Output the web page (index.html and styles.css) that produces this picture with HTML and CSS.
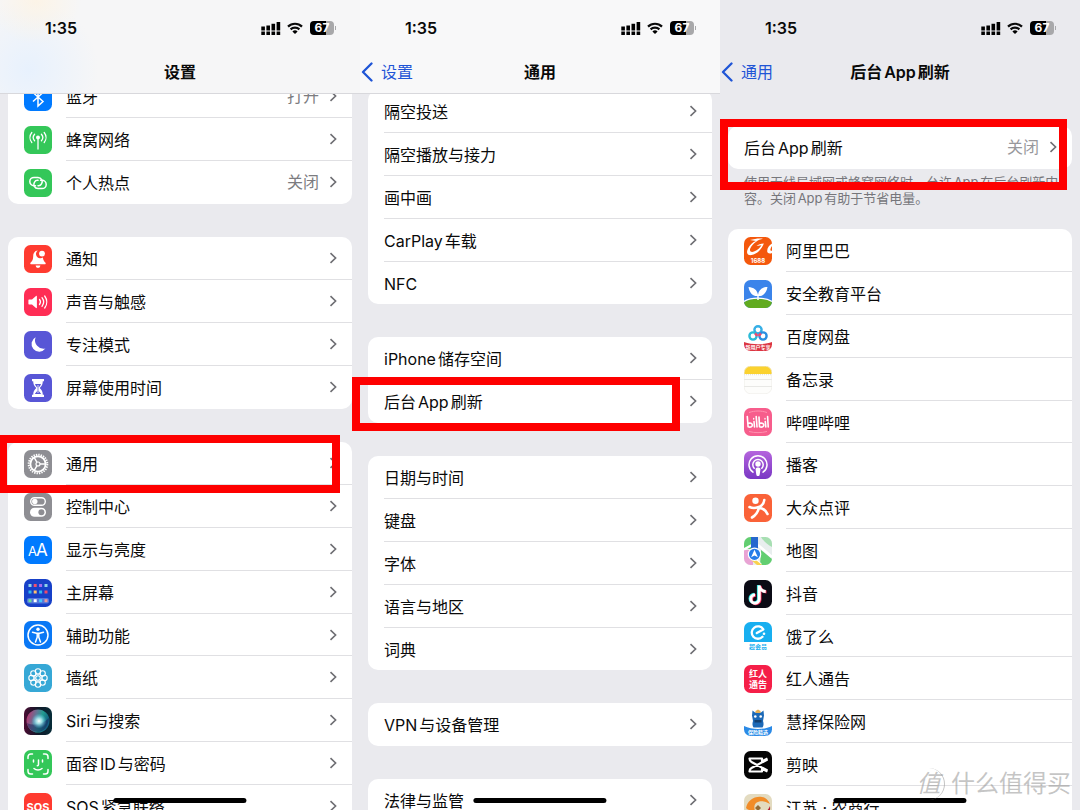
FILE: index.html
```html
<!DOCTYPE html>
<html lang="zh-CN">
<head>
    <meta charset="UTF-8">
    <meta name="viewport" content="width=device-width, initial-scale=1.0">
    <title>后台App刷新</title>
    <link rel="stylesheet" href="styles.css">
</head>
<body>

    <!-- Shared symbols -->
    <svg class="symbols" aria-hidden="true">
        <symbol id="chevron" viewBox="0 0 8 12">
            <path d="M1.5 1.2 6.6 6l-5.1 4.8" fill="none" stroke="currentColor" stroke-width="1.6"/>
        </symbol>
        <symbol id="back" viewBox="0 0 12 20">
            <path d="M10.5 1.5 2 10l8.5 8.5" fill="none" stroke="currentColor" stroke-width="2.3" stroke-linecap="round" stroke-linejoin="round"/>
        </symbol>
        <symbol id="signal" viewBox="0 0 20 13">
            <path d="M.3 4.6h3.600v3.800H.3zM5.400 3.500H9v4.900H5.400zM10.500 1.800h3.600v6.600h-3.600zM15.600 0h3.600v8.400h-3.600zM.3 9.600h3.600V13H.3zM5.400 9.600H9V13H5.400zM10.500 9.600h3.600V13h-3.600zM15.600 9.600h3.600V13h-3.600z"/>
        </symbol>
        <symbol id="wifi" viewBox="0 0 16 12">
            <g fill="none" stroke="currentColor" stroke-width="2.2">
                <path d="M1 4.6a10 10 0 0 1 14 0"/>
                <path d="M3.6 7.4a6.3 6.3 0 0 1 8.8 0"/>
            </g>
            <path d="M8 12 5.4 9.4a3.8 3.8 0 0 1 5.2 0z"/>
        </symbol>
    </svg>

    <main class="screens">

        <!-- Settings -->
        <section class="screen">
            <header class="top tinted">
                <div class="status">
                    <span class="time">1:35</span>
                    <svg class="signal"><use href="#signal"/></svg>
                    <svg class="wifi"><use href="#wifi"/></svg>
                    <span class="battery">67</span>
                </div>
                <div class="nav"><h1>设置</h1></div>
            </header>

            <div class="content">
                <ul class="group">
                    <li><a class="row" href="#">
                        <svg class="icon" viewBox="0 0 28 28"><rect width="28" height="28" rx="6.5" fill="#007aff"/><path d="m9 9.500 10 9L14 23V5l5 4.500-10 9" fill="none" stroke="#fff" stroke-width="1.5"/></svg>
                        <span class="body"><span class="label">蓝牙</span><span class="value">打开</span><svg class="chevron"><use href="#chevron"/></svg></span>
                    </a></li>
                    <li><a class="row" href="#">
                        <svg class="icon" viewBox="0 0 28 28"><rect width="28" height="28" rx="6.5" fill="#34c759"/><circle cx="14" cy="11.5" r="2" fill="#fff"/><path d="M14 12v11M10.600 8.200a5 5 0 0 0 0 6.600M17.400 8.200a5 5 0 0 1 0 6.600M7.800 6.500a8 8 0 0 0 0 10M20.200 6.500a8 8 0 0 1 0 10" fill="none" stroke="#fff" stroke-width="1.3" stroke-linecap="round"/></svg>
                        <span class="body"><span class="label">蜂窝网络</span><svg class="chevron"><use href="#chevron"/></svg></span>
                    </a></li>
                    <li><a class="row" href="#">
                        <svg class="icon" viewBox="0 0 28 28"><rect width="28" height="28" rx="6.5" fill="#34c759"/><g fill="none" stroke="#fff" stroke-width="1.5" stroke-linecap="round"><path d="M11.500 16.800H10a4.200 4.200 0 0 1 0-8.400h4a4.200 4.200 0 0 1 3.500 6.500 3.500 3.500 0 0 1-3.500 1.800"/><path d="M16.500 11.200H18a4.200 4.200 0 0 1 0 8.400h-4a4.200 4.200 0 0 1-3.500-6.500 3.500 3.500 0 0 1 3.500-1.800"/></g></svg>
                        <span class="body"><span class="label">个人热点</span><span class="value">关闭</span><svg class="chevron"><use href="#chevron"/></svg></span>
                    </a></li>
                </ul>

                <ul class="group">
                    <li><a class="row" href="#">
                        <svg class="icon" viewBox="0 0 28 28"><rect width="28" height="28" rx="6.5" fill="#ff3b30"/><path d="M13.800 5.400c-3.400.3-4.500 3-4.600 5.800-.1 3.400-.9 5-2.700 6.500-.5.500-.2 1.600.7 1.600h13.600c.9 0 1.200-1.100.7-1.600-1.500-1.300-2.300-2.700-2.600-5.200a4 4 0 0 1-5.100-7.100zM11.600 20.600h4.800a2.400 2.400 0 0 1-4.800 0z" fill="#fff"/><circle cx="18" cy="8.6" r="2.9" fill="#fff"/></svg>
                        <span class="body"><span class="label">通知</span><svg class="chevron"><use href="#chevron"/></svg></span>
                    </a></li>
                    <li><a class="row" href="#">
                        <svg class="icon" viewBox="0 0 28 28"><rect width="28" height="28" rx="6.5" fill="#ff2d55"/><path d="M5 11.500h3l4-3.600c.4-.3.900-.1.900.5v11.200c0 .6-.5.800-.9.500L8 16.500H5c-.4 0-.6-.3-.6-.7v-3.600c0-.4.2-.7.6-.7z" fill="#fff"/><path d="M15.500 11.500a4 4 0 0 1 0 5M18 9.700a7 7 0 0 1 0 8.600M20.700 8a10 10 0 0 1 0 12" fill="none" stroke="#fff" stroke-width="1.3" stroke-linecap="round"/></svg>
                        <span class="body"><span class="label">声音与触感</span><svg class="chevron"><use href="#chevron"/></svg></span>
                    </a></li>
                    <li><a class="row" href="#">
                        <svg class="icon" viewBox="0 0 28 28"><rect width="28" height="28" rx="6.5" fill="#5856d6"/><path d="M11.600 6.200a8.600 8.600 0 0 0 9.800 11.400A7.700 7.700 0 1 1 11.600 6.200z" fill="#fff"/></svg>
                        <span class="body"><span class="label">专注模式</span><svg class="chevron"><use href="#chevron"/></svg></span>
                    </a></li>
                    <li><a class="row" href="#">
                        <svg class="icon" viewBox="0 0 28 28"><rect width="28" height="28" rx="6.5" fill="#5856d6"/><path d="M8 5h12v2.200h-1.200c0 3-1 4.900-3.100 6.800 2.100 1.900 3.100 3.800 3.100 6.800H20V23H8v-2.200h1.200c0-3 1-4.900 3.100-6.800-2.100-1.900-3.100-3.800-3.100-6.800H8z" fill="#fff"/><path d="M11 10h6c-.5 1.500-1.300 2.500-2.400 3.500v3.200l2.600 3.300h-6.400l2.600-3.300v-3.200C12.300 12.500 11.500 11.500 11 10z" fill="#5856d6"/><path d="M14 11v8" stroke="#fff" stroke-width=".8"/></svg>
                        <span class="body"><span class="label">屏幕使用时间</span><svg class="chevron"><use href="#chevron"/></svg></span>
                    </a></li>
                </ul>

                <ul class="group">
                    <li class="marked"><a class="row" href="#">
                        <svg class="icon" viewBox="0 0 28 28"><rect width="28" height="28" rx="6.5" fill="#8e8e93"/><g fill="none" stroke="#fff"><circle cx="14" cy="14" r="9.3" stroke-width="2" stroke-dasharray="1.4 1.034"/><circle cx="14" cy="14" r="7.6" stroke-width="1.8"/><circle cx="14" cy="14" r="2" stroke-width="1.2"/><path d="M16 14h6M13 12.300 10 7.200M13 15.700l-3 5.100" stroke-width="1.4"/></g></svg>
                        <span class="body"><span class="label">通用</span><svg class="chevron"><use href="#chevron"/></svg></span>
                    </a><span class="mark mark-general"></span></li>
                    <li><a class="row" href="#">
                        <svg class="icon" viewBox="0 0 28 28"><rect width="28" height="28" rx="6.5" fill="#8e8e93"/><rect x="6.7" y="4.7" width="14.6" height="7.6" rx="3.8" fill="none" stroke="#fff" stroke-width="1.4"/><circle cx="10.800" cy="8.5" r="2.7" fill="#fff"/><rect x="6" y="14.8" width="16" height="9" rx="4.5" fill="#fff"/><circle cx="17.4" cy="19.3" r="3" fill="#8e8e93"/></svg>
                        <span class="body"><span class="label">控制中心</span><svg class="chevron"><use href="#chevron"/></svg></span>
                    </a></li>
                    <li><a class="row" href="#">
                        <svg class="icon" viewBox="0 0 28 28"><rect width="28" height="28" rx="6.5" fill="#007aff"/><text x="4" y="20" font-size="13" fill="#fff">A</text><text x="12" y="20" font-size="17" fill="#fff">A</text></svg>
                        <span class="body"><span class="label">显示与亮度</span><svg class="chevron"><use href="#chevron"/></svg></span>
                    </a></li>
                    <li><a class="row" href="#">
                        <svg class="icon" viewBox="0 0 28 28"><rect width="28" height="28" rx="6.5" fill="#1740c8"/><rect x="3" y="19" width="22" height="5.5" rx="2" fill="#5478dd"/><path d="M4.500 5h3v3h-3zM20.500 5h3v3h-3z" fill="#8fd5e8"/><path d="M9.700 5h3v3h-3z" fill="#f0506e"/><path d="M15.100 5h3v3h-3z" fill="#a86bf0"/><path d="M4.500 11.500h3v3h-3zM15.100 11.500h3v3h-3z" fill="#30b8f0"/><path d="M9.700 11.500h3v3h-3z" fill="#ffc06a"/><path d="M20.500 11.500h3v3h-3z" fill="#f04868"/><path d="M4.500 20.200h3v3h-3z" fill="#70df95"/><path d="M9.700 20.200h3v3h-3z" fill="#fff"/><path d="M15.100 20.200h3v3h-3z" fill="#42c9ff"/><path d="M20.500 20.200h3v3h-3z" fill="#ec9b9b"/></svg>
                        <span class="body"><span class="label">主屏幕</span><svg class="chevron"><use href="#chevron"/></svg></span>
                    </a></li>
                    <li><a class="row" href="#">
                        <svg class="icon" viewBox="0 0 28 28"><rect width="28" height="28" rx="6.5" fill="#0a78f5"/><circle cx="14" cy="14" r="10" fill="none" stroke="#fff" stroke-width="1.5"/><circle cx="14" cy="8.3" r="1.7" fill="#fff"/><path d="m8.500 11.300 4 1h3l4-1M13.200 12.300v4L11.500 21M14.800 12.300v4l1.700 4.700" fill="none" stroke="#fff" stroke-width="1.5" stroke-linecap="round" stroke-linejoin="round"/></svg>
                        <span class="body"><span class="label">辅助功能</span><svg class="chevron"><use href="#chevron"/></svg></span>
                    </a></li>
                    <li><a class="row" href="#">
                        <svg class="icon" viewBox="0 0 28 28"><rect width="28" height="28" rx="6.5" fill="#36a8d6"/><g fill="none" stroke="#fff" stroke-width="1.1"><circle cx="14" cy="14" r="2.3"/><circle cx="14" cy="7.5" r="2.7"/><circle cx="18.6" cy="9.4" r="2.7"/><circle cx="20.5" cy="14" r="2.7"/><circle cx="18.6" cy="18.6" r="2.7"/><circle cx="14" cy="20.5" r="2.7"/><circle cx="9.4" cy="18.6" r="2.7"/><circle cx="7.5" cy="14" r="2.7"/><circle cx="9.4" cy="9.4" r="2.7"/><circle cx="14" cy="14" r="4.2" stroke-width=".8"/></g></svg>
                        <span class="body"><span class="label">墙纸</span><svg class="chevron"><use href="#chevron"/></svg></span>
                    </a></li>
                    <li><a class="row" href="#">
                        <svg class="icon" viewBox="0 0 28 28">
                            <defs>
                                <linearGradient id="siri-edge"><stop stop-color="#4a0c32"/><stop offset=".5" stop-color="#101828"/><stop offset="1" stop-color="#062c38"/></linearGradient>
                                <linearGradient id="siri-ball" x2="1" y2=".3"><stop stop-color="#d02468"/><stop offset=".45" stop-color="#5f7896"/><stop offset=".7" stop-color="#209c90"/><stop offset="1" stop-color="#126080"/></linearGradient>
                                <radialGradient id="siri-glow"><stop stop-color="#fff"/><stop offset=".4" stop-color="#b5eff5" stop-opacity=".8"/><stop offset="1" stop-color="#5cc8f0" stop-opacity="0"/></radialGradient>
                            </defs>
                            <rect width="28" height="28" rx="6.5" fill="url(#siri-edge)"/><circle cx="14" cy="14" r="11.5" fill="url(#siri-ball)"/><path d="M3 16c6 3 15 2 22-5-1 9-6 14-11 14S4 22 3 16z" fill="#171d58" opacity=".5"/><circle cx="15" cy="14" r="7.5" fill="url(#siri-glow)"/></svg>
                        <span class="body"><span class="label">Siri与搜索</span><svg class="chevron"><use href="#chevron"/></svg></span>
                    </a></li>
                    <li><a class="row" href="#">
                        <svg class="icon" viewBox="0 0 28 28"><rect width="28" height="28" rx="6.5" fill="#34c759"/><path d="M4 8.500V6.800A2.800 2.800 0 0 1 6.800 4h1.700M19.500 4h1.700A2.800 2.800 0 0 1 24 6.800v1.700M24 19.500v1.700a2.800 2.800 0 0 1-2.800 2.800h-1.700M8.500 24H6.800A2.800 2.800 0 0 1 4 21.200v-1.700M9.500 10v2M18.500 10v2M14.500 10v4.500c0 .8-.4 1.200-1.200 1.200M10 18.500c2.200 2 5.800 2 8 0" fill="none" stroke="#fff" stroke-width="1.5" stroke-linecap="round"/></svg>
                        <span class="body"><span class="label">面容ID与密码</span><svg class="chevron"><use href="#chevron"/></svg></span>
                    </a></li>
                    <li><a class="row" href="#">
                        <svg class="icon" viewBox="0 0 28 28"><rect width="28" height="28" rx="6.5" fill="#ff3b30"/><text x="14" y="18" font-size="11" font-weight="700" text-anchor="middle" fill="#fff">SOS</text></svg>
                        <span class="body"><span class="label">SOS紧急联络</span><svg class="chevron"><use href="#chevron"/></svg></span>
                    </a></li>
                </ul>
            </div>
            <div class="home-bar"></div>
        </section>

        <!-- General -->
        <section class="screen">
            <header class="top">
                <div class="status">
                    <span class="time">1:35</span>
                    <svg class="signal"><use href="#signal"/></svg>
                    <svg class="wifi"><use href="#wifi"/></svg>
                    <span class="battery">67</span>
                </div>
                <div class="nav">
                    <a class="back" href="#"><svg><use href="#back"/></svg>设置</a>
                    <h1>通用</h1>
                </div>
            </header>

            <div class="content content-general">
                <ul class="group">
                    <li><a class="row" href="#"><span class="body"><span class="label">隔空投送</span><svg class="chevron"><use href="#chevron"/></svg></span></a></li>
                    <li><a class="row" href="#"><span class="body"><span class="label">隔空播放与接力</span><svg class="chevron"><use href="#chevron"/></svg></span></a></li>
                    <li><a class="row" href="#"><span class="body"><span class="label">画中画</span><svg class="chevron"><use href="#chevron"/></svg></span></a></li>
                    <li><a class="row" href="#"><span class="body"><span class="label">CarPlay车载</span><svg class="chevron"><use href="#chevron"/></svg></span></a></li>
                    <li><a class="row" href="#"><span class="body"><span class="label">NFC</span><svg class="chevron"><use href="#chevron"/></svg></span></a></li>
                </ul>

                <ul class="group">
                    <li><a class="row" href="#"><span class="body"><span class="label">iPhone储存空间</span><svg class="chevron"><use href="#chevron"/></svg></span></a></li>
                    <li class="marked"><a class="row" href="#"><span class="body"><span class="label">后台App刷新</span><svg class="chevron"><use href="#chevron"/></svg></span></a><span class="mark mark-refresh"></span></li>
                </ul>

                <ul class="group">
                    <li><a class="row" href="#"><span class="body"><span class="label">日期与时间</span><svg class="chevron"><use href="#chevron"/></svg></span></a></li>
                    <li><a class="row" href="#"><span class="body"><span class="label">键盘</span><svg class="chevron"><use href="#chevron"/></svg></span></a></li>
                    <li><a class="row" href="#"><span class="body"><span class="label">字体</span><svg class="chevron"><use href="#chevron"/></svg></span></a></li>
                    <li><a class="row" href="#"><span class="body"><span class="label">语言与地区</span><svg class="chevron"><use href="#chevron"/></svg></span></a></li>
                    <li><a class="row" href="#"><span class="body"><span class="label">词典</span><svg class="chevron"><use href="#chevron"/></svg></span></a></li>
                </ul>

                <ul class="group">
                    <li><a class="row" href="#"><span class="body"><span class="label">VPN与设备管理</span><svg class="chevron"><use href="#chevron"/></svg></span></a></li>
                </ul>

                <ul class="group">
                    <li><a class="row" href="#"><span class="body"><span class="label">法律与监管</span><svg class="chevron"><use href="#chevron"/></svg></span></a></li>
                </ul>
            </div>
            <div class="home-bar"></div>
        </section>

        <!-- Background App Refresh -->
        <section class="screen">
            <header class="top plain">
                <div class="status">
                    <span class="time">1:35</span>
                    <svg class="signal"><use href="#signal"/></svg>
                    <svg class="wifi"><use href="#wifi"/></svg>
                    <span class="battery">67</span>
                </div>
                <div class="nav">
                    <a class="back" href="#"><svg><use href="#back"/></svg>通用</a>
                    <h1>后台App刷新</h1>
                </div>
            </header>

            <div class="content content-refresh">
                <ul class="group">
                    <li class="marked"><a class="row" href="#"><span class="body"><span class="label">后台App刷新</span><span class="value light">关闭</span><svg class="chevron"><use href="#chevron"/></svg></span></a><span class="mark mark-status"></span></li>
                </ul>
                <p class="note">使用无线局域网或蜂窝网络时，允许App在后台刷新内容。关闭App有助于节省电量。</p>

                <ul class="group">
                    <li><a class="row" href="#">
                        <svg class="icon" viewBox="0 0 28 28"><defs><clipPath id="tile"><rect width="28" height="28" rx="6.5"/></clipPath></defs><g clip-path="url(#tile)"><path d="M0 0h28v28H0z" fill="#f4580c"/><path d="M6 3c5-1.500 10-2 13-1.200-5 .7-10 4.600-12.500 9.200-1.600 3.200.6 4.700 3.500 3.500 4-1.600 6-4 7.500-6.300l-5 .8c2-1.500 4-2.200 7.300-2.400-2 5.500-6.500 10.600-12.300 11.500C3 18.800 2 15.500 4 11.500c1.700-3.500 5-6.500 8-7.500zM28 6.500c-3 1.500-5 5-4.800 8 .2 2 2.800 2.400 4.800 1.400v-2.200c-1.400.3-1.800-.4-1.500-1.700.2-1 .7-2 1.500-3z" fill="#fff"/><text x="14" y="25.5" font-size="6" font-weight="700" text-anchor="middle" fill="#fff">1688</text></g></svg>
                        <span class="body"><span class="label">阿里巴巴</span></span>
                    </a></li>
                    <li><a class="row" href="#">
                        <svg class="icon" viewBox="0 0 28 28"><g clip-path="url(#tile)"><path d="M0 0h28v28H0z" fill="#3b84ea"/><path d="M0 22c7-4.500 21-4.500 28 0v6H0z" fill="#61ab20"/><path d="M0 21.500c7-4.500 21-4.500 28 0" fill="none" stroke="#fff" stroke-width="1.3"/><path d="M14 16c-5 .5-8.500-3-9.500-9 5 .2 9 3 9.500 8 .5-5 4.500-8 9.500-8-1 6-4.500 9.500-9.500 9zM13.300 14.500h1.400V20h-1.400z" fill="#fff"/></g></svg>
                        <span class="body"><span class="label">安全教育平台</span></span>
                    </a></li>
                    <li><a class="row" href="#">
                        <svg class="icon" viewBox="0 0 28 28"><g clip-path="url(#tile)"><path d="M0 0h28v28H0z" fill="#fff"/><path d="M0 19c8 3 20 3 28 0v9H0z" fill="#dc3542"/><g fill="none" stroke-width="2.4"><circle cx="14" cy="6.800" r="3.6" stroke="#36afe6"/><circle cx="9" cy="13" r="3.6" stroke="#2bbbd7"/><circle cx="19" cy="13" r="3.6" stroke="#2b8fe0"/><path d="m11 10.500 2.500 2.300M17 10.500l-2.500 2.300" stroke="#ec4a70"/></g><text x="14" y="25.5" font-size="5" font-weight="700" text-anchor="middle" fill="#fff">新用户专享</text></g></svg>
                        <span class="body"><span class="label">百度网盘</span></span>
                    </a></li>
                    <li><a class="row" href="#">
                        <svg class="icon" viewBox="0 0 28 28"><g clip-path="url(#tile)"><path d="M0 0h28v28H0z" fill="#fdfdfb"/><path d="M0 0h28v8H0z" fill="#fbd22f"/><path d="M0 13.500h28M0 20.500h28" stroke="#e2e2e0" stroke-width=".8"/><path d="M0 8.700h28" stroke="#d8d2bd" stroke-width=".7" stroke-dasharray="1"/></g><rect x=".3" y=".3" width="27.4" height="27.4" rx="6.3" fill="none" stroke="#ecebe5" stroke-width=".6"/></svg>
                        <span class="body"><span class="label">备忘录</span></span>
                    </a></li>
                    <li><a class="row" href="#">
                        <svg class="icon" viewBox="0 0 28 28"><rect width="28" height="28" rx="6.5" fill="#f75d8c"/><g fill="none" stroke="#fff" stroke-width="1.6" stroke-linecap="round" stroke-linejoin="round"><path d="m3.300 8.500.8 10.300c2.700.8 4.500-.2 4.200-2-.3-1.700-2-1.900-4.100-1.500M10 13.500l.5 5.500M12.200 8.500l.8 10.500M15 9l.5 9.800c2.700.8 4.500-.2 4.200-2-.3-1.700-2-1.900-4.100-1.500M21.300 13.500l.5 5.500M23.600 8.500l.6 10.500"/><path d="M9.700 10.500v.5M21 10.500v.5" stroke-width="1.3"/></g><path d="M5 4.500c6-2 12-2 18 0M5 23.500c6 1.500 12 1.500 18 0" fill="none" stroke="#ff91b0"/></svg>
                        <span class="body"><span class="label">哔哩哔哩</span></span>
                    </a></li>
                    <li><a class="row" href="#">
                        <svg class="icon" viewBox="0 0 28 28"><defs><linearGradient id="pod" x2="0" y2="1"><stop stop-color="#b565dd"/><stop offset="1" stop-color="#7937c4"/></linearGradient></defs><rect width="28" height="28" rx="6.5" fill="url(#pod)"/><g fill="none" stroke="#fff" stroke-width="1.5" stroke-linecap="round"><path d="M9 21.200a9 9 0 1 1 10 0"/><path d="M10.200 17.200a5.200 5.200 0 1 1 7.600 0"/></g><circle cx="14" cy="13" r="2.7" fill="#fff"/><path d="M11.600 18.500c0-1.500 1-2 2.400-2s2.400.5 2.400 2l-.7 5c-.2 1.200-.7 1.500-1.700 1.500s-1.500-.3-1.700-1.500z" fill="#fff"/></svg>
                        <span class="body"><span class="label">播客</span></span>
                    </a></li>
                    <li><a class="row" href="#">
                        <svg class="icon" viewBox="0 0 28 28"><rect width="28" height="28" rx="6.5" fill="#fa6238"/><circle cx="11.5" cy="6.8" r="3.2" fill="#fff"/><path d="M5.500 13c2.500 1.200 5.500 1.300 8.500.3 3.500-1.200 6-4 6.300-7.300M15 13.500c-1 4.500-3.500 8-7 10M14.500 14c4.500 0 7.500 2.500 9 6" fill="none" stroke="#fff" stroke-width="2.6" stroke-linecap="round"/></svg>
                        <span class="body"><span class="label">大众点评</span></span>
                    </a></li>
                    <li><a class="row" href="#">
                        <svg class="icon" viewBox="0 0 28 28"><g clip-path="url(#tile)"><path d="M0 0h28v28H0z" fill="#e8eeee"/><path d="M0 0h8v12H0zM17 13l11 9v6H16z" fill="#62ce70"/><path d="M17 0c3 5 7 8 11 10V0z" fill="#a7dfb2"/><path d="M0 13h9v15H0z" fill="#e9a3d4"/><path d="M0 12.500 8 8M14 8l14 12M6 17l11 11" fill="none" stroke="#fff" stroke-width="2.5"/><path d="M9 20.500 18 28h-5l-6-5z" fill="#fad14d"/><path d="M7 0h7v12H7z" fill="#2568ce"/></g><circle cx="10.5" cy="17.3" r="6.2" fill="#247ce8" stroke="#fff" stroke-width="1.2"/><path d="m10.500 12.800 3.400 7.500-3.400-1.700-3.400 1.700z" fill="#fff"/></svg>
                        <span class="body"><span class="label">地图</span></span>
                    </a></li>
                    <li><a class="row" href="#">
                        <svg class="icon" viewBox="0 0 28 28"><rect width="28" height="28" rx="6.5" fill="#0b0b15"/><g fill="none" stroke-width="3"><path d="M14.400 5v13.500a4.200 4.200 0 1 1-4.200-4.200M14.400 5.500c.3 3.500 3 5.800 6.500 6" stroke="#25e5e0"/><path d="M16 6v13.500a4.200 4.200 0 1 1-4.200-4.200M16 6c.3 3.500 3 5.800 6.500 6" stroke="#fb2c59"/><path d="M15.200 5.500V19a4.200 4.200 0 1 1-4.200-4.200M15.200 5.500c.3 3.500 3 5.800 6.500 6" stroke="#fff"/></g></svg>
                        <span class="body"><span class="label">抖音</span></span>
                    </a></li>
                    <li><a class="row" href="#">
                        <svg class="icon" viewBox="0 0 28 28"><g clip-path="url(#tile)"><path d="M0 0h28v28H0z" fill="#fff"/><path d="M0 0h28v20H0z" fill="#18aff0"/><text x="14" y="27" font-size="6" font-weight="700" text-anchor="middle" fill="#18aff0">超会员</text></g><path d="M18.500 14.800a6.200 6.200 0 1 1 .8-7.400l-6.500 3.700" fill="none" stroke="#fff" stroke-width="2.3" stroke-linecap="round" stroke-linejoin="round"/><circle cx="20" cy="11.8" r="1.3" fill="#fff"/></svg>
                        <span class="body"><span class="label">饿了么</span></span>
                    </a></li>
                    <li><a class="row" href="#">
                        <svg class="icon" viewBox="0 0 28 28"><rect width="28" height="28" rx="6.5" fill="#f51f48"/><g font-size="9" font-weight="700" text-anchor="middle" fill="#fff"><text x="14" y="12">红人</text><text x="14" y="22.5">通告</text></g></svg>
                        <span class="body"><span class="label">红人通告</span></span>
                    </a></li>
                    <li><a class="row" href="#">
                        <svg class="icon" viewBox="0 0 28 28"><g clip-path="url(#tile)"><path d="M0 0h28v28H0z" fill="#fff"/><path d="m8.500 2.500 2.500 2h6l2.500-2 .5 5-1 5.500c1 3 .5 5-.5 6.500h-9c-1-1.500-1.500-3.500-.5-6.500L8 7.500z" fill="#1c69b7"/><path d="M0 18c8 4 20 4 28 0v10H0z" fill="#2b8ae6"/><path d="M11.500 3 14 1.500 16.500 3v2h-5z" fill="#e4af55"/><circle cx="11.3" cy="8.5" r="1.3" fill="#fff"/><circle cx="16.7" cy="8.5" r="1.3" fill="#fff"/><path d="M10.500 12h7v2.500h-7z" fill="#123f70"/><text x="14" y="26" font-size="5" font-weight="700" text-anchor="middle" fill="#fff">保险精选</text></g></svg>
                        <span class="body"><span class="label">慧择保险网</span></span>
                    </a></li>
                    <li><a class="row" href="#">
                        <svg class="icon" viewBox="0 0 28 28"><rect width="28" height="28" rx="6.5" fill="#050505"/><path d="M23.500 8.500 7.500 17c-1.500.8-2 1.500-2 3.500H18v-2.800l5.500 2.800M23.500 19.500 7.500 11c-1.500-.8-2-1.500-2-3.500H18v2.800l5.500-2.800" fill="none" stroke="#fff" stroke-width="2.2" stroke-linejoin="round"/></svg>
                        <span class="body"><span class="label">剪映</span></span>
                    </a></li>
                    <li><a class="row" href="#">
                        <svg class="icon" viewBox="0 0 28 28"><g clip-path="url(#tile)"><path d="M0 0h28v28H0z" fill="#e3dbc0"/><path d="M2 14C4 6 10 2 18 3c4 .5 6 3 8 7-5-3-10-4-14-1-2 2-2 5-1 8-4 0-7-1-9-3z" fill="#f18c28"/><path d="M26 12c1 8-4 14-12 14-5 0-8-2-10-6 7 3 17 3 22-8z" fill="#b41e33"/><path d="m14 11 3 3-3 3-3-3z" fill="#936a35"/></g></svg>
                        <span class="body"><span class="label">江苏 · 农商行</span></span>
                    </a></li>
                </ul>
            </div>
            <div class="home-bar"></div>
            <div class="watermark"><span class="seal">值</span><span>什么值得买</span></div>
        </section>

    </main>

</body>
</html>
```

FILE: styles.css
```css
* {
    box-sizing: border-box;
}
body {
    margin: 0;
    font-family: Inter, "Noto Sans CJK SC", sans-serif;
    font-size: 16px;
    line-height: 24px;
    color: #0a0a0a;
    background: #eaeaee;
    text-autospace: normal;
}
.symbols {
    position: absolute;
    width: 0;
    height: 0;
}
.screens {
    display: grid;
    grid-template-columns: repeat(3, 1fr);
    grid-template-rows: 100%;
    height: 100vh;
    overflow: hidden;
}
.screen {
    position: relative;
    min-width: 0;
}

/* Status and navigation bars */
.top {
    position: relative;
    z-index: 1;
    height: 94px;
    background: #f8f8f9;
    border-bottom: 1px solid #d8d8dc;
}
.top.tinted {
    background:
        radial-gradient(circle at 10% 0, rgba(255, 243, 224, 0.7), transparent 45px),
        radial-gradient(circle at 8% 75%, rgba(228, 240, 255, 0.8), transparent 70px),
        #f6f6f7;
}
.top.plain {
    background: #eaeaee;
    border-bottom-color: transparent;
}
.status {
    display: flex;
    align-items: center;
    height: 56px;
    padding: 0 26px 0 45px;
}
.time {
    flex: 1;
    font-weight: 600;
}
.signal {
    width: 20px;
    height: 13px;
}
.wifi {
    width: 16px;
    height: 12px;
    margin: 0 7px 0 6px;
}
.battery {
    position: relative;
    width: 24px;
    height: 14px;
    border-radius: 4px;
    background: linear-gradient(90deg, #000 67%, #a8a8aa 67%);
    color: #fff;
    font-size: 12px;
    font-weight: 700;
    line-height: 14px;
    text-align: center;
}
.battery::after {
    content: "";
    position: absolute;
    top: 5px;
    right: -2px;
    width: 1px;
    height: 4px;
    background: #a8a8aa;
}
.nav {
    display: grid;
    grid-template-columns: 1fr auto 1fr;
    align-items: center;
    height: 32px;
}
.nav h1 {
    grid-column: 2;
    margin: 0;
    font-size: 16px;
    font-weight: 600;
}
.back {
    display: flex;
    align-items: center;
    gap: 8px;
    padding-left: 1px;
    color: #1f55d6;
    text-decoration: none;
}
.back svg {
    width: 12px;
    height: 20px;
}

/* Lists */
.content {
    display: flex;
    flex-direction: column;
    gap: 33px;
    margin-top: -19px;
    padding: 0 8px;
}
.content-general {
    margin-top: -4px;
}
.content-refresh {
    gap: 0;
    margin-top: 32px;
}
.group {
    display: grid;
    grid-auto-rows: 43px 43px 43px 43px 42px;
    margin: 0;
    padding: 0;
    list-style: none;
    background: #fff;
    border-radius: 10px;
}
.row {
    display: flex;
    align-items: center;
    gap: 14px;
    height: 100%;
    padding-left: 16px;
    color: inherit;
    text-decoration: none;
}
.icon {
    width: 28px;
    height: 28px;
}
.body {
    display: flex;
    flex: 1;
    align-items: center;
    height: 100%;
    padding-right: 15px;
    border-bottom: 1px solid #e0e0e3;
}
.group li:last-child .body {
    border-bottom-color: transparent;
}
.label {
    flex: 1;
    padding-top: 2px;
}
.value {
    margin-right: 10px;
    color: #7c7c80;
}
.value.light {
    color: #98989c;
}
.chevron {
    width: 8px;
    height: 12px;
    color: #6e6e73;
}
.note {
    margin: 5px 0 23px;
    padding: 0 6px 0 16px;
    font-size: 13px;
    line-height: 16px;
    color: #76767b;
}

/* Red highlight frames */
.marked {
    position: relative;
}
.mark {
    position: absolute;
    z-index: 2;
    border: 8px solid #fe0000;
    pointer-events: none;
}
.mark-general {
    inset: -7px 12px -8px -9px;
}
.mark-refresh {
    inset: -3px 32px -8px -16px;
}
.mark-status {
    inset: -7px 5px -21px -8px;
}

.home-bar {
    position: absolute;
    bottom: 7px;
    left: 50%;
    width: 37%;
    height: 5px;
    border-radius: 3px;
    background: #000;
    transform: translateX(-50%);
}
.watermark {
    position: absolute;
    right: 9px;
    bottom: 10px;
    display: flex;
    align-items: center;
    gap: 6px;
    color: rgba(140, 140, 140, 0.5);
    font-size: 24px;
    line-height: 32px;
}
.seal {
    width: 32px;
    height: 32px;
    border-right: 1px solid;
    border-radius: 50%;
    font-style: italic;
    text-align: center;
}
```
